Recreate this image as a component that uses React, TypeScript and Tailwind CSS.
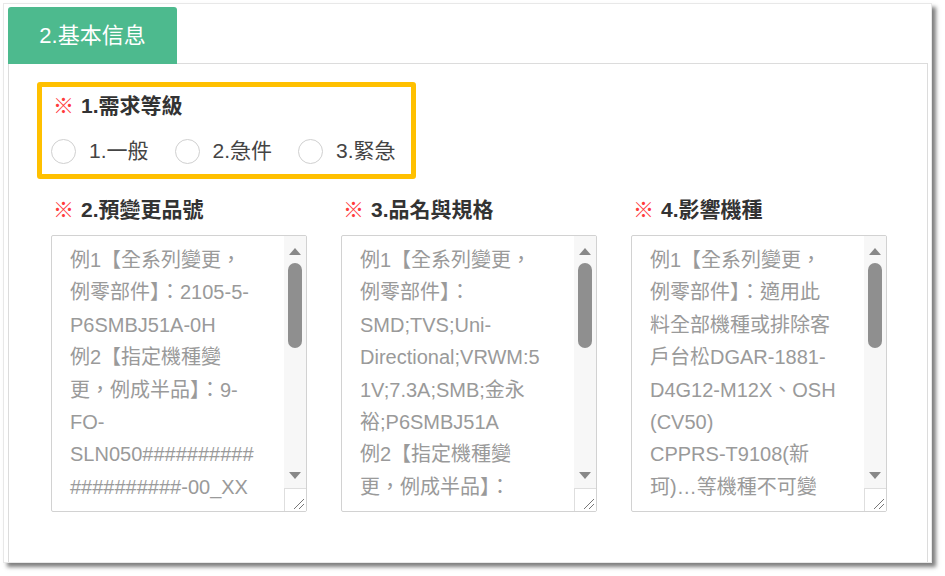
import React from "react";

const FONT = '"Liberation Sans", "Noto Sans CJK TC", sans-serif';

function FakeTextarea({ lines }: { lines: string[] }) {
  return (
    <div className="flex h-[277px] w-[256px] overflow-hidden rounded-[2px] border border-[#d2d2d2] bg-white">
      <div className="flex-1 overflow-hidden pl-[18px] pt-[8px] text-[20px] leading-[32.4px] text-[#9a9a9a]">
        {lines.map((l, i) => (
          <div key={i} className="whitespace-nowrap">
            {l}
          </div>
        ))}
      </div>
      <div className="flex w-[22px] flex-col bg-[#f7f7f7]">
        <div className="flex justify-center pt-[12px]">
          <svg width="12" height="7" viewBox="0 0 12 7">
            <polygon points="6,0 12,7 0,7" fill="#888" />
          </svg>
        </div>
        <div className="mx-auto mt-[8px] h-[85px] w-[14px] rounded-full bg-[#8f8f8f]" />
        <div className="flex-1" />
        <div className="flex justify-center">
          <svg width="12" height="7" viewBox="0 0 12 7">
            <polygon points="0,0 12,0 6,7" fill="#888" />
          </svg>
        </div>
        <div className="mt-[9px] h-[23px] border-l border-t border-[#dedede] bg-white">
          <svg width="21" height="22" viewBox="0 0 21 22">
            <line x1="9" y1="20" x2="19" y2="10" stroke="#777" strokeWidth="1" />
            <line x1="14" y1="20" x2="19" y2="15" stroke="#777" strokeWidth="1" />
          </svg>
        </div>
      </div>
    </div>
  );
}

function Field({ label, lines }: { label: string; lines: string[] }) {
  return (
    <div className="flex w-[256px] flex-col">
      <div className="flex h-[28px] items-center pl-[2px] text-[21px] font-bold leading-[28px] text-[#333]">
        <span className="mr-[7px] text-[#ff3b3b]">※</span>
        <span>{label}</span>
      </div>
      <div className="mt-[11px]">
        <FakeTextarea lines={lines} />
      </div>
    </div>
  );
}

function Radio({ label }: { label: string }) {
  return (
    <div className="flex items-center">
      <div className="h-[25px] w-[25px] rounded-full border-[1.5px] border-[#d0d0d0] bg-white" />
      <span className="ml-[13px] text-[21px] leading-[28px] text-[#444]">{label}</span>
    </div>
  );
}

export default function App() {
  return (
    <div className="h-[576px] w-[945px] overflow-hidden bg-white" style={{ fontFamily: FONT }}>
      <div className="ml-[3px] mt-[3px] flex h-[560px] w-[929px] flex-col border border-[#e8e8e8] bg-white pl-[4px] pt-[3px] shadow-[4px_4px_4px_rgba(0,0,0,0.5)]">
        <div className="relative z-10 flex h-[57px] w-[169px] items-center justify-center rounded-t-[3px] bg-[#4dba8e] text-[22px] text-white">
          2.基本信息
        </div>
        <div className="-mt-px flex-1 w-[920px] border-l border-r border-t border-[#dcdcdc] pl-[28px] pt-[18px]">
          <div className="h-[97px] w-[379px] rounded-[3px] border-[5px] border-[#ffc000] pl-[11px] pt-[5px]">
            <div className="flex h-[28px] items-center text-[21px] font-bold text-[#333]">
              <span className="mr-[7px] text-[#ff3b3b]">※</span>
              <span>1.需求等級</span>
            </div>
            <div className="-ml-[2px] mt-[17px] flex items-center gap-[26px]">
              <Radio label="1.一般" />
              <Radio label="2.急件" />
              <Radio label="3.緊急" />
            </div>
          </div>
          <div className="mt-[17px] flex gap-[34px] pl-[14px]">
            <Field
              label="2.預變更品號"
              lines={[
                "例1【全系列變更，",
                "例零部件】：2105-5-",
                "P6SMBJ51A-0H",
                "例2【指定機種變",
                "更，例成半品】：9-",
                "FO-",
                "SLN050##########",
                "##########-00_XX",
              ]}
            />
            <Field
              label="3.品名與規格"
              lines={[
                "例1【全系列變更，",
                "例零部件】：",
                "SMD;TVS;Uni-",
                "Directional;VRWM:5",
                "1V;7.3A;SMB;金永",
                "裕;P6SMBJ51A",
                "例2【指定機種變",
                "更，例成半品】：",
              ]}
            />
            <Field
              label="4.影響機種"
              lines={[
                "例1【全系列變更，",
                "例零部件】：適用此",
                "料全部機種或排除客",
                "戶台松DGAR-1881-",
                "D4G12-M12X、OSH",
                "(CV50)",
                "CPPRS-T9108(新",
                "珂)…等機種不可變",
              ]}
            />
          </div>
        </div>
      </div>
    </div>
  );
}
